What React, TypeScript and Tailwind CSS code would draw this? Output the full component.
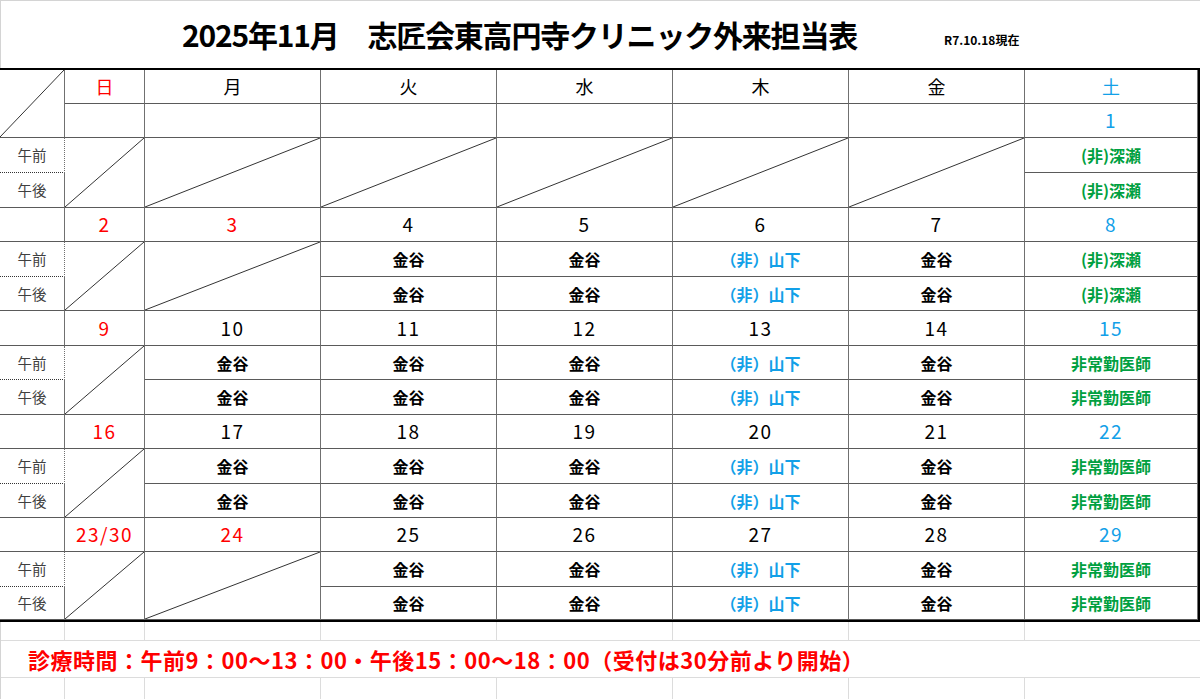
const jp = { fontFamily: '"Noto Sans CJK JP", "Noto Sans", sans-serif' };

type Week = { dates: string[]; slots: (string | null)[] };

const DAYS = ["日", "月", "火", "水", "木", "金", "土"];
const HOLIDAYS = ["3", "24"];

const weeks: Week[] = [
  { dates: ["", "", "", "", "", "", "1"], slots: [null, null, null, null, null, null, "(非)深瀬"] },
  { dates: ["2", "3", "4", "5", "6", "7", "8"], slots: [null, null, "金谷", "金谷", "（非）山下", "金谷", "(非)深瀬"] },
  { dates: ["9", "10", "11", "12", "13", "14", "15"], slots: [null, "金谷", "金谷", "金谷", "（非）山下", "金谷", "非常勤医師"] },
  { dates: ["16", "17", "18", "19", "20", "21", "22"], slots: [null, "金谷", "金谷", "金谷", "（非）山下", "金谷", "非常勤医師"] },
  { dates: ["23/30", "24", "25", "26", "27", "28", "29"], slots: [null, null, "金谷", "金谷", "（非）山下", "金谷", "非常勤医師"] },
];

function Diagonal() {
  return (
    <svg className="absolute inset-0 h-full w-full" viewBox="0 0 100 100" preserveAspectRatio="none">
      <line x1="0" y1="100" x2="100" y2="0" stroke="#333" strokeWidth="1" vectorEffect="non-scaling-stroke" />
    </svg>
  );
}

function dayColor(i: number) {
  if (i === 0) return "text-[#ff0000]";
  if (i === 6) return "text-[#12a0e8]";
  return "text-black";
}

function slotColor(text: string) {
  if (text.includes("山下")) return "text-[#12a0e8]";
  if (text === "金谷") return "text-black";
  return "text-[#00a040]";
}

const cellBase = (i: number) =>
  "flex items-center justify-center border-b border-[#5a5a5a] " + (i < 7 ? "border-r border-r-[#707070]" : "");

export default function App() {
  return (
    <div className="w-[1200px] h-[699px] overflow-hidden bg-white" style={jp}>
      {/* title */}
      <div className="flex h-[68px] border-l border-t border-[#d4d4d4]">
        <div className="flex w-[943px] items-center pl-[181px] text-[30px] font-bold text-black tracking-[-1.2px]">
          2025年11月　志匠会東高円寺クリニック外来担当表
        </div>
        <div className="flex items-center pt-[11px] text-[12px] font-bold text-black">R7.10.18現在</div>
      </div>

      {/* schedule table */}
      <div className="grid grid-cols-[65px_80px_176px_176px_176px_176px_176px_173px] grid-rows-[34px_34px_35px_35px_34px_35px_34px_35px_34px_35px_34px_35px_34px_34px_35px_33px] border-t-2 border-r-2 border-b-2 border-black">
        <div className="relative row-span-2 border-b border-r border-[#5a5a5a] border-r-[#707070]">
          <Diagonal />
        </div>
        {DAYS.map((d, i) => (
          <div key={d} className={cellBase(i) + " text-[18px] " + dayColor(i)}>
            {d}
          </div>
        ))}

        {weeks.map((w, wi) => (
          <>
            {wi > 0 && <div key={`blank${wi}`} className="border-b border-r border-[#5a5a5a] border-r-[#707070]" />}
            {w.dates.map((d, i) => (
              <div
                key={`d${wi}-${i}`}
                className={
                  cellBase(i) +
                  " text-[19px] tracking-[1.5px] " +
                  (HOLIDAYS.includes(d) ? "text-[#ff0000]" : dayColor(i))
                }
              >
                {d}
              </div>
            ))}

            <div key={`am${wi}`} className="flex items-center justify-center border-b border-dotted border-b-[#333] border-r border-r-[#707070] text-[14.5px] text-[#404040]">
              午前
            </div>
            {w.slots.map((s, i) =>
              s === null ? (
                <div key={`x${wi}-${i}`} className={"relative row-span-2 " + cellBase(i)}>
                  <Diagonal />
                </div>
              ) : (
                <div key={`a${wi}-${i}`} className={cellBase(i) + " text-[16px] font-bold " + slotColor(s)}>
                  {s}
                </div>
              )
            )}

            <div key={`pm${wi}`} className="flex items-center justify-center border-b border-r border-[#5a5a5a] border-r-[#707070] text-[14.5px] text-[#404040]">
              午後
            </div>
            {w.slots.map((s, i) =>
              s === null ? null : (
                <div key={`p${wi}-${i}`} className={cellBase(i) + " text-[16px] font-bold " + slotColor(s)}>
                  {s}
                </div>
              )
            )}
          </>
        ))}
      </div>

      {/* spreadsheet rows below the table */}
      <div className="grid grid-cols-[64px_80px_176px_176px_176px_176px_176px_176px] grid-rows-[19px_37px_22px] border-l border-[#d4d4d4]">
        {DAYS.concat(["x"]).map((k, i) => (
          <div key={`g1${i}`} className="border-b border-r border-[#dcdcdc]" />
        ))}
        <div className="col-span-8 flex items-center border-b border-[#dcdcdc] pl-[27px] text-[22px] font-bold tracking-[0.5px] text-[#ff0000]">
          診療時間：午前9：00～13：00・午後15：00～18：00（受付は30分前より開始）
        </div>
        {DAYS.concat(["x"]).map((k, i) => (
          <div key={`g3${i}`} className="border-r border-[#dcdcdc]" />
        ))}
      </div>
    </div>
  );
}
